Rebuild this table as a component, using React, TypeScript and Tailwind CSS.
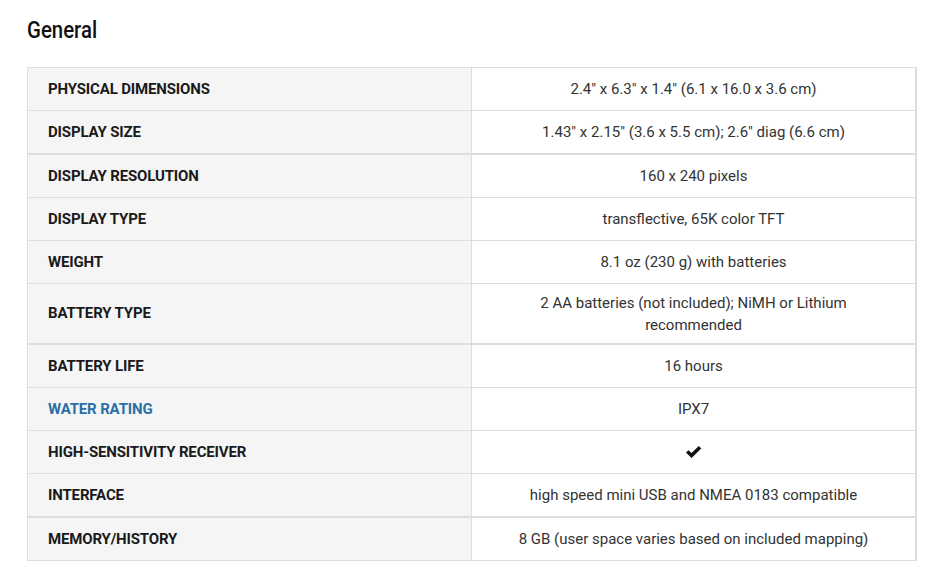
import { ReactNode } from "react";

type Spec = {
  label: string;
  value: ReactNode;
  link?: boolean;
  thick?: boolean;
  tall?: boolean;
};

const Check = () => (
  <svg width="17" height="14" viewBox="0 0 17 14" className="inline-block">
    <path d="M1 7.5 L3.5 5.2 L6.5 8 L13.8 1 L16.3 3.4 L6.5 13 Z" fill="#111" />
  </svg>
);

const specs: Spec[] = [
  { label: "PHYSICAL DIMENSIONS", value: '2.4" x 6.3" x 1.4" (6.1 x 16.0 x 3.6 cm)' },
  { label: "DISPLAY SIZE", value: '1.43" x 2.15" (3.6 x 5.5 cm); 2.6" diag (6.6 cm)', thick: true },
  { label: "DISPLAY RESOLUTION", value: "160 x 240 pixels" },
  { label: "DISPLAY TYPE", value: "transflective, 65K color TFT" },
  { label: "WEIGHT", value: "8.1 oz (230 g) with batteries" },
  {
    label: "BATTERY TYPE",
    value: "2 AA batteries (not included); NiMH or Lithium recommended",
    thick: true,
    tall: true,
  },
  { label: "BATTERY LIFE", value: "16 hours" },
  { label: "WATER RATING", value: "IPX7", link: true },
  { label: "HIGH-SENSITIVITY RECEIVER", value: <Check /> },
  { label: "INTERFACE", value: "high speed mini USB and NMEA 0183 compatible", thick: true },
  { label: "MEMORY/HISTORY", value: "8 GB (user space varies based on included mapping)" },
];

export default function App() {
  return (
    <div className="w-[944px] h-[586px] bg-white font-['Roboto',sans-serif] text-[#222]">
      <div className="pl-[27px] pt-[16px]">
        <h2 className="origin-left scale-x-[0.85] text-[24px] leading-[28px] font-medium text-[#111]">
          General
        </h2>
        <div className="mt-[23px] w-[890px] border-t border-l border-r-2 border-[#ddd]">
          {specs.map((s) => (
            <div
              key={s.label}
              className={`flex border-[#ddd] ${s.thick ? "border-b-2" : "border-b"} ${
                s.tall ? "h-[61px]" : s.thick ? "h-[44px]" : "h-[43px]"
              }`}
            >
              <div className="w-[444px] shrink-0 bg-[#f5f5f5] border-r border-[#ddd] px-[20px] flex items-center">
                <span
                  className={`text-[15px] font-bold tracking-[-0.01em] ${
                    s.link ? "text-[#2b6fa5]" : "text-[#1a1a1a]"
                  }`}
                >
                  {s.label}
                </span>
              </div>
              <div className="flex-1 flex items-center justify-center px-[40px] text-center text-[15px] leading-[22px] text-[#333]">
                {s.value}
              </div>
            </div>
          ))}
        </div>
      </div>
    </div>
  );
}
